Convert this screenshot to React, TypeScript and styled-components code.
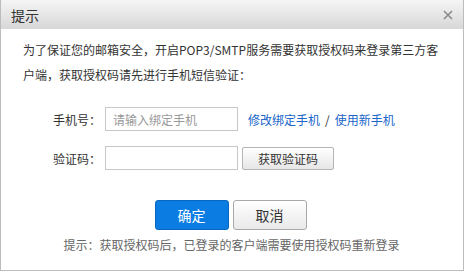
import * as React from "react";
import styled, { createGlobalStyle } from "styled-components";

const GlobalStyle = createGlobalStyle`
  html, body {
    margin: 0;
    padding: 0;
    background: #fff;
  }

  body {
    font-family: "Noto Sans CJK SC", "Liberation Sans", sans-serif;
    font-size: 12px;
    color: #333;
  }
`;

const Dialog = styled.div`
  box-sizing: border-box;
  width: 464px;
  height: 271px;
  border: 1px solid #bcbcbc;
  border-top: none;
  display: flex;
  flex-direction: column;
  background: #fff;
`;

const Header = styled.div`
  height: 29px;
  flex: none;
  display: flex;
  align-items: center;
  justify-content: space-between;
  padding: 0 10px 0 10px;
  background: linear-gradient(to bottom, #f5f5f5, #d7d7d7);
`;

const Title = styled.h1`
  margin: 0;
  font-size: 14px;
  font-weight: normal;
  color: #333;
`;

const CloseIcon = styled.svg`
  width: 10px;
  height: 10px;
  display: block;
`;

const Body = styled.div`
  padding: 8px 21px 0 22px;
  flex: 1;
  display: flex;
  flex-direction: column;
`;

const Intro = styled.p`
  margin: 0;
  line-height: 25px;
  color: #333;
`;

const Form = styled.div`
  margin: 20px 0 0 30px;
  display: grid;
  grid-template-columns: 48px auto;
  column-gap: 4px;
  row-gap: 15px;
  align-items: center;
`;

const Label = styled.label`
  text-align: right;
  white-space: nowrap;
  color: #333;
`;

const Field = styled.div`
  display: flex;
  align-items: center;
  gap: 4px;
`;

const Input = styled.input`
  box-sizing: border-box;
  width: 133px;
  height: 24px;
  border: 1px solid #c8c8c8;
  padding: 0 7px;
  font: inherit;
  color: #333;
  outline: none;

  &::placeholder {
    color: #999;
  }
`;

const Links = styled.span`
  margin-left: 6px;
  color: #333;
  white-space: nowrap;
`;

const Link = styled.a`
  color: #2066c8;
  text-decoration: none;
`;

const Slash = styled.span`
  margin: 0 5px;
`;

const CodeButton = styled.button`
  box-sizing: border-box;
  width: 92px;
  height: 23px;
  padding: 0;
  border: 1px solid #b4b4b4;
  border-radius: 2px;
  background: linear-gradient(to bottom, #ffffff, #e6e6e6);
  font: inherit;
  color: #333;
`;

const Actions = styled.div`
  margin-top: 30px;
  display: flex;
  justify-content: center;
  gap: 4px;
  padding-right: 4px;
`;

const ActionButton = styled.button<{ $primary?: boolean }>`
  box-sizing: border-box;
  width: 74px;
  height: 30px;
  padding: 0;
  border-radius: 3px;
  font-family: inherit;
  font-size: 14px;
  border: 1px solid ${(p) => (p.$primary ? "#0a67c0" : "#a9a9a9")};
  color: ${(p) => (p.$primary ? "#fff" : "#333")};
  background: ${(p) =>
    p.$primary
      ? "#0b7de2"
      : "linear-gradient(to bottom, #ffffff, #e9e9e9)"};
`;

const Hint = styled.div`
  margin-top: 8px;
  line-height: 14px;
  text-align: center;
  color: #666;
  padding-right: 2px;
`;

export default function App() {
  return (
    <>
      <GlobalStyle />
      <Dialog>
        <Header>
          <Title>提示</Title>
          <CloseIcon viewBox="0 0 10 10">
            <path d="M1 1 L9 9 M9 1 L1 9" stroke="#8a8a8a" strokeWidth="1.6" />
          </CloseIcon>
        </Header>
        <Body>
          <Intro>
            为了保证您的邮箱安全，开启POP3/SMTP服务需要获取授权码来登录第三方客户端，获取授权码请先进行手机短信验证：
          </Intro>
          <Form>
            <Label>手机号：</Label>
            <Field>
              <Input placeholder="请输入绑定手机" />
              <Links>
                <Link href="#">修改绑定手机</Link>
                <Slash>/</Slash>
                <Link href="#">使用新手机</Link>
              </Links>
            </Field>
            <Label>验证码：</Label>
            <Field>
              <Input />
              <CodeButton>获取验证码</CodeButton>
            </Field>
          </Form>
          <Actions>
            <ActionButton $primary>确定</ActionButton>
            <ActionButton>取消</ActionButton>
          </Actions>
          <Hint>提示：获取授权码后，已登录的客户端需要使用授权码重新登录</Hint>
        </Body>
      </Dialog>
    </>
  );
}
